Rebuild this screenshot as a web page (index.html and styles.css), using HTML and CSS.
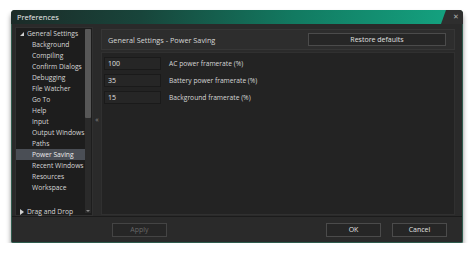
FILE: index.html
```html
<!DOCTYPE html>
<html lang="en">
<head>
  <meta charset="UTF-8">
  <title>Preferences</title>
  <link rel="stylesheet" href="styles.css">
</head>
<body>

  <div class="window">
    <div class="titlebar">
      <div class="title">Preferences</div>
      <div class="close">&#x2715;</div>
    </div>

    <div class="main">
      <div class="tree">
        <div class="tree-list">
          <div class="node open">General Settings</div>
          <div class="leaf">Background</div>
          <div class="leaf">Compiling</div>
          <div class="leaf">Confirm Dialogs</div>
          <div class="leaf">Debugging</div>
          <div class="leaf">File Watcher</div>
          <div class="leaf">Go To</div>
          <div class="leaf">Help</div>
          <div class="leaf">Input</div>
          <div class="leaf">Output Windows</div>
          <div class="leaf">Paths</div>
          <div class="leaf selected">Power Saving</div>
          <div class="leaf">Recent Windows</div>
          <div class="leaf">Resources</div>
          <div class="leaf">Workspace</div>
          <div class="node closed spaced">Drag and Drop</div>
        </div>
        <div class="scrollbar">
          <div class="thumb"></div>
          <div class="arrow-down"></div>
        </div>
      </div>

      <div class="splitter">&laquo;</div>

      <div class="panel">
        <div class="panel-header">
          <span>General Settings - Power Saving</span>
          <button class="btn restore">Restore defaults</button>
        </div>
        <div class="panel-body">
          <div class="field">
            <input class="num" type="text" value="100">
            <label>AC power framerate (%)</label>
          </div>
          <div class="field">
            <input class="num" type="text" value="35">
            <label>Battery power framerate (%)</label>
          </div>
          <div class="field">
            <input class="num" type="text" value="15">
            <label>Background framerate (%)</label>
          </div>
        </div>
      </div>
    </div>

    <div class="footer">
      <button class="btn apply" disabled>Apply</button>
      <div class="spacer"></div>
      <button class="btn">OK</button>
      <button class="btn">Cancel</button>
    </div>
  </div>

</body>
</html>
```

FILE: styles.css
```css
body {
  margin: 0;
  background: #fff;
  font-family: "Open Sans", "Liberation Sans", sans-serif;
  font-size: 6.7px;
  color: #d6d6d6;
}

.window {
  margin: 10px 0 0 11px;
  width: 452px;
  height: 233px;
  box-sizing: border-box;
  display: flex;
  flex-direction: column;
  background: #2a2a2a;
  border: 1px solid #2f5c4e;
  border-top: none;
  border-radius: 4px 4px 2px 2px;
  box-shadow: 0 4px 5px rgba(0, 0, 0, 0.45);
}

.titlebar {
  height: 14px;
  display: flex;
  margin: 0 -1px;
}

.title {
  flex: 1;
  padding-left: 6px;
  line-height: 14px;
  font-size: 7.5px;
  color: #ececec;
  border-radius: 4px 0 0 0;
  background: linear-gradient(90deg, #1c2b28 0%, #18453b 30%, #127a61 65%, #14a17f 100%);
}

.close {
  width: 22px;
  margin-left: -5px;
  background: #2e2e2e;
  clip-path: polygon(5px 0, 100% 0, 100% 100%, 0 100%);
  border-radius: 0 4px 0 0;
  color: #b0b0b0;
  font-size: 7px;
  line-height: 13px;
  text-align: right;
  padding-right: 4px;
  box-sizing: border-box;
}

.main {
  flex: 1;
  display: flex;
  padding: 3px 7px 0 3px;
  min-height: 0;
}

.tree {
  width: 78px;
  display: flex;
  background: #1d1d1d;
  border: 1px solid #303030;
  box-sizing: border-box;
}

.tree-list {
  flex: 1;
}

.tree-list div {
  height: 11px;
  line-height: 11px;
  white-space: nowrap;
}

.node {
  padding-left: 11px;
  position: relative;
}

.node::before {
  content: "";
  position: absolute;
  left: 4px;
  top: 4px;
  border-style: solid;
}

.node.open::before {
  border-width: 0 0 4px 4px;
  border-color: transparent transparent #cfcfcf transparent;
}

.node.closed::before {
  top: 3px;
  border-width: 3px 0 3px 4px;
  border-color: transparent transparent transparent #cfcfcf;
}

.spaced {
  margin-top: 13px;
}

.leaf {
  padding-left: 16px;
}

.leaf.selected {
  background: #4a4e55;
  color: #ececec;
}

.scrollbar {
  width: 6px;
  margin: 1px 1px 2px 0;
  background: #2a2a2a;
  display: flex;
  flex-direction: column;
  justify-content: space-between;
  align-items: center;
}

.thumb {
  width: 6px;
  height: 89px;
  background: #575757;
  border-radius: 1px;
}

.arrow-down {
  width: 0;
  height: 0;
  border-style: solid;
  border-width: 2px 2px 0 2px;
  border-color: #888 transparent transparent transparent;
  margin-bottom: 1px;
}

.splitter {
  width: 8px;
  display: flex;
  align-items: center;
  justify-content: center;
  color: #8a8a8a;
  font-size: 7px;
  padding-bottom: 4px;
}

.panel {
  flex: 1;
  display: flex;
  flex-direction: column;
  gap: 2px;
  padding-top: 2px;
}

.panel-header {
  height: 21px;
  display: flex;
  align-items: center;
  justify-content: space-between;
  padding: 0 8px 0 6px;
  background: #2d2d2d;
  border: 1px solid #363636;
  box-sizing: border-box;
  font-size: 7.3px;
}

.btn {
  font-family: inherit;
  font-size: 7px;
  color: #e0e0e0;
  background: #262626;
  border: 1px solid #4b4b4b;
  height: 14px;
  padding: 0;
  box-sizing: border-box;
}

.restore {
  width: 138px;
  height: 13px;
}

.panel-body {
  flex: 1;
  background: #232323;
  border: 1px solid #303030;
  margin-bottom: 1px;
  padding: 4px 0 0 2px;
  display: flex;
  flex-direction: column;
  gap: 4px;
}

.field {
  display: flex;
  align-items: center;
}

.num {
  width: 57px;
  height: 13px;
  box-sizing: border-box;
  background: #262626;
  border: 1px solid #1a1a1a;
  color: #e0e0e0;
  font-family: inherit;
  font-size: 7px;
  padding: 0 3px;
  margin: 0 8px 0 0;
}

.footer {
  height: 26px;
  display: flex;
  align-items: center;
  padding: 0 15px 0 100px;
  gap: 11px;
  border-top: 1px solid #1b1b1b;
  background: #2a2a2a;
  box-sizing: border-box;
}

.footer .btn {
  width: 55px;
}

.apply {
  color: #676767;
  border-color: #444;
}

.spacer {
  flex: 1;
}
```
